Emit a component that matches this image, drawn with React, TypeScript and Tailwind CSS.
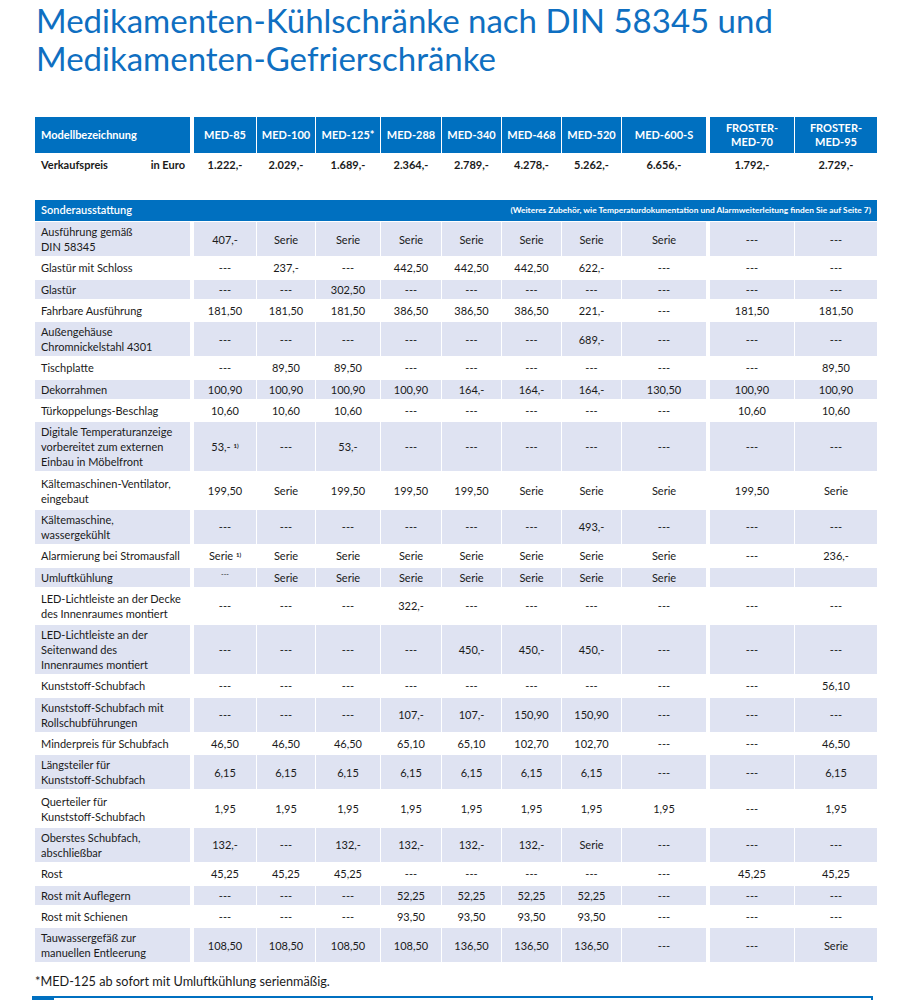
import React from "react";

const COLS = ["MED-85", "MED-100", "MED-125*", "MED-288", "MED-340", "MED-468", "MED-520", "MED-600-S", "FROSTER-\nMED-70", "FROSTER-\nMED-95"];
const PRICES = ["1.222,-", "2.029,-", "1.689,-", "2.364,-", "2.789,-", "4.278,-", "5.262,-", "6.656,-", "1.792,-", "2.729,-"];
const COLW = ["w-[62px]", "w-[58px]", "w-[64px]", "w-[60px]", "w-[59px]", "w-[59px]", "w-[59px]", "w-[84px]", "w-[84px]", "w-[82px]"];
const COLM = ["ml-[4px]", "ml-px", "ml-px", "ml-px", "ml-px", "ml-px", "ml-px", "ml-px", "ml-[4px]", "ml-px"];

const D = "---";
const SUP = "§";

type Row = { label: string[]; vals: string[] };

const ROWS: Row[] = [
  { label: ["Ausführung gemäß", "DIN 58345"], vals: ["407,-", "Serie", "Serie", "Serie", "Serie", "Serie", "Serie", "Serie", D, D] },
  { label: ["Glastür mit Schloss"], vals: [D, "237,-", D, "442,50", "442,50", "442,50", "622,-", D, D, D] },
  { label: ["Glastür"], vals: [D, D, "302,50", D, D, D, D, D, D, D] },
  { label: ["Fahrbare Ausführung"], vals: ["181,50", "181,50", "181,50", "386,50", "386,50", "386,50", "221,-", D, "181,50", "181,50"] },
  { label: ["Außengehäuse", "Chromnickelstahl 4301"], vals: [D, D, D, D, D, D, "689,-", D, D, D] },
  { label: ["Tischplatte"], vals: [D, "89,50", "89,50", D, D, D, D, D, D, "89,50"] },
  { label: ["Dekorrahmen"], vals: ["100,90", "100,90", "100,90", "100,90", "164,-", "164,-", "164,-", "130,50", "100,90", "100,90"] },
  { label: ["Türkoppelungs-Beschlag"], vals: ["10,60", "10,60", "10,60", D, D, D, D, D, "10,60", "10,60"] },
  { label: ["Digitale Temperaturanzeige", "vorbereitet zum externen", "Einbau in Möbelfront"], vals: ["53,-" + SUP, D, "53,-", D, D, D, D, D, D, D] },
  { label: ["Kältemaschinen-Ventilator,", "eingebaut"], vals: ["199,50", "Serie", "199,50", "199,50", "199,50", "Serie", "Serie", "Serie", "199,50", "Serie"] },
  { label: ["Kältemaschine,", "wassergekühlt"], vals: [D, D, D, D, D, D, "493,-", D, D, D] },
  { label: ["Alarmierung bei Stromausfall"], vals: ["Serie" + SUP, "Serie", "Serie", "Serie", "Serie", "Serie", "Serie", "Serie", D, "236,-"] },
  { label: ["Umluftkühlung"], vals: ["~", "Serie", "Serie", "Serie", "Serie", "Serie", "Serie", "Serie", "", ""] },
  { label: ["LED-Lichtleiste an der Decke", "des Innenraumes montiert"], vals: [D, D, D, "322,-", D, D, D, D, D, D] },
  { label: ["LED-Lichtleiste an der", "Seitenwand des", "Innenraumes montiert"], vals: [D, D, D, D, "450,-", "450,-", "450,-", D, D, D] },
  { label: ["Kunststoff-Schubfach"], vals: [D, D, D, D, D, D, D, D, D, "56,10"] },
  { label: ["Kunststoff-Schubfach mit", "Rollschubführungen"], vals: [D, D, D, "107,-", "107,-", "150,90", "150,90", D, D, D] },
  { label: ["Minderpreis für Schubfach"], vals: ["46,50", "46,50", "46,50", "65,10", "65,10", "102,70", "102,70", D, D, "46,50"] },
  { label: ["Längsteiler für", "Kunststoff-Schubfach"], vals: ["6,15", "6,15", "6,15", "6,15", "6,15", "6,15", "6,15", D, D, "6,15"] },
  { label: ["Querteiler für", "Kunststoff-Schubfach"], vals: ["1,95", "1,95", "1,95", "1,95", "1,95", "1,95", "1,95", "1,95", D, "1,95"] },
  { label: ["Oberstes Schubfach,", "abschließbar"], vals: ["132,-", D, "132,-", "132,-", "132,-", "132,-", "Serie", D, D, D] },
  { label: ["Rost"], vals: ["45,25", "45,25", "45,25", D, D, D, D, D, "45,25", "45,25"] },
  { label: ["Rost mit Auflegern"], vals: [D, D, D, "52,25", "52,25", "52,25", "52,25", D, D, D] },
  { label: ["Rost mit Schienen"], vals: [D, D, D, "93,50", "93,50", "93,50", "93,50", D, D, D] },
  { label: ["Tauwassergefäß zur", "manuellen Entleerung"], vals: ["108,50", "108,50", "108,50", "108,50", "136,50", "136,50", "136,50", D, D, "Serie"] },
];

function Val({ v }: { v: string }) {
  if (v === "~") return <span className="text-[7px] leading-none -translate-y-[3px] inline-block">---</span>;
  if (v.endsWith(SUP)) {
    return (
      <span>
        {v.slice(0, -1)} <sup className="text-[6px] font-bold">1)</sup>
      </span>
    );
  }
  return <span>{v}</span>;
}

export default function App() {
  return (
    <div className="w-[909px] h-[1000px] overflow-hidden bg-white text-[#1a1a1a] font-['Lato',sans-serif]">
      <h1 className="pl-[36px] text-[#0f6fc1] text-[33px] font-normal">
        <div className="leading-[40px]">Medikamenten-Kühlschränke nach DIN 58345 und</div>
        <div className="leading-[40px] -mt-[2px]">Medikamenten-Gefrierschränke</div>
      </h1>

      <div className="ml-[35px] mt-[39px] text-[11px]">
        {/* header */}
        <div className="flex h-[36px] text-white font-bold text-[11px]">
          <div className="w-[155px] shrink-0 bg-[#0070c0] flex items-center px-[6px]">Modellbezeichnung</div>
          {COLS.map((c, i) => (
            <div key={i} className={`${COLW[i]} ${COLM[i]} shrink-0 bg-[#0070c0] flex items-center justify-center text-center leading-[14px] whitespace-pre-line`}>
              {c}
            </div>
          ))}
        </div>
        {/* price */}
        <div className="flex h-[23px] font-bold items-center pt-px">
          <div className="w-[155px] shrink-0 flex justify-between px-[6px] pr-[5px]">
            <span>Verkaufspreis</span>
            <span>in Euro</span>
          </div>
          {PRICES.map((p, i) => (
            <div key={i} className={`${COLW[i]} ${COLM[i]} shrink-0 text-center`}>
              {p}
            </div>
          ))}
        </div>

        {/* Sonderausstattung */}
        <div className="mt-[24px] w-[842px] h-[21px] bg-[#0070c0] text-white flex items-center justify-between px-[6px]">
          <span className="font-semibold text-[11px]">Sonderausstattung</span>
          <span className="font-bold text-[8.4px]">(Weiteres Zubehör, wie Temperaturdokumentation und Alarmweiterleitung finden Sie auf Seite 7)</span>
        </div>

        <div className="flex flex-col gap-y-[2.3px] mt-px">
          {ROWS.map((r, ri) => {
            const shade = ri % 2 === 0 ? "bg-[#dfe3f2]" : "bg-white";
            return (
              <div key={ri} className="flex leading-[15px]">
                <div className={`w-[155px] shrink-0 px-[6px] py-[2px] ${shade}`}>
                  {r.label.map((l, li) => (
                    <div key={li} className="whitespace-nowrap">{l}</div>
                  ))}
                </div>
                {r.vals.map((v, i) => (
                  <div key={i} className={`${COLW[i]} ${COLM[i]} shrink-0 flex items-center justify-center ${shade}`}>
                    <Val v={v} />
                  </div>
                ))}
              </div>
            );
          })}
        </div>

        <div className="mt-[10px] text-[12.7px] leading-[18px]">*MED-125 ab sofort mit Umluftkühlung serienmäßig.</div>
      </div>

      <div className="ml-[32px] mt-[6px] w-[841px] h-[10px] border-t-2 border-x-2 border-[#0070c0] flex">
        <div className="w-[20px] h-full bg-[#0070c0]" />
      </div>
    </div>
  );
}
